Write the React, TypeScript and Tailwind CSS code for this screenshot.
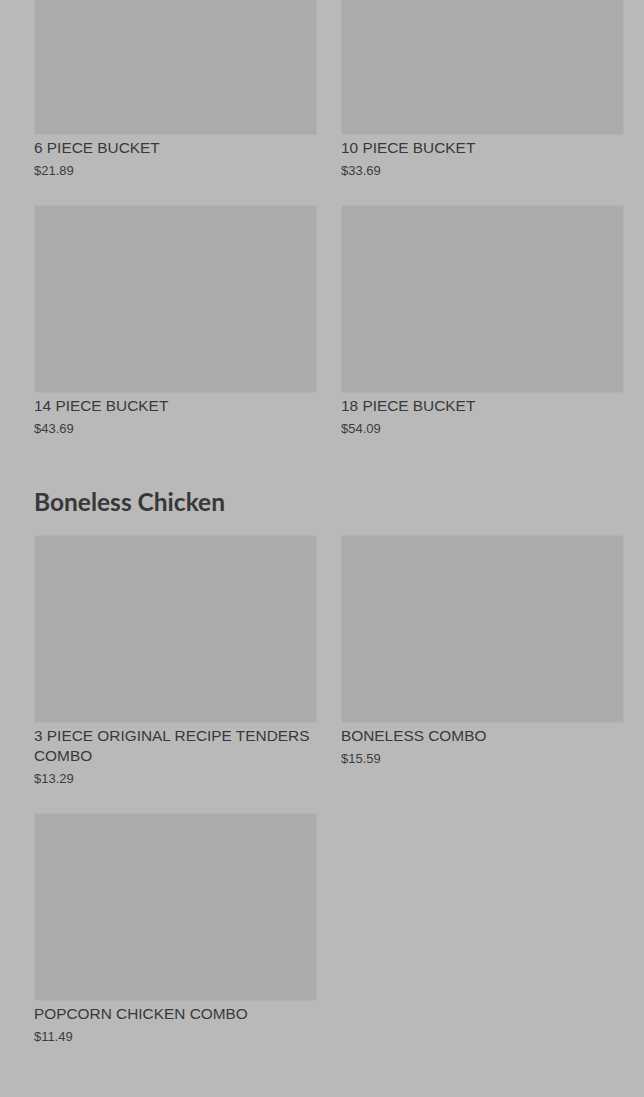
type Item = { name: string; price: string };

const buckets: Item[] = [
  { name: '6 PIECE BUCKET', price: '$21.89' },
  { name: '10 PIECE BUCKET', price: '$33.69' },
  { name: '14 PIECE BUCKET', price: '$43.69' },
  { name: '18 PIECE BUCKET', price: '$54.09' },
];

const boneless: Item[] = [
  { name: '3 PIECE ORIGINAL RECIPE TENDERS COMBO', price: '$13.29' },
  { name: 'BONELESS COMBO', price: '$15.59' },
  { name: 'POPCORN CHICKEN COMBO', price: '$11.49' },
];

function Card({ item }: { item: Item }) {
  return (
    <div className="flex flex-col">
      <div className="h-[188px] bg-[#ababab] border border-[#b3b3b3] rounded-[2px]"></div>
      <h3 className="mt-[3px] text-[15.4px] leading-[20px] text-[#393939] font-['Liberation_Sans',Arial,sans-serif]">
        {item.name}
      </h3>
      <div className="mt-[3px] text-[13px] leading-[20px] text-[#3d3d3d] font-['Liberation_Sans',Arial,sans-serif]">
        {item.price}
      </div>
    </div>
  );
}

export default function App() {
  return (
    <div className="min-h-[1097px] bg-[#b9b9b9] pl-[34px] pr-[20px] pt-0 overflow-hidden">
      <div className="grid grid-cols-2 gap-x-6 gap-y-6 -mt-[53px]">
        {buckets.map((b) => (
          <Card key={b.name} item={b} />
        ))}
      </div>
      <h2 className="mt-[47px] mb-[17px] text-[24.5px] leading-[32px] font-bold text-[#383838] font-['Lato',sans-serif]">
        Boneless Chicken
      </h2>
      <div className="grid grid-cols-2 gap-x-6 gap-y-6">
        {boneless.map((b) => (
          <Card key={b.name} item={b} />
        ))}
      </div>
    </div>
  );
}
